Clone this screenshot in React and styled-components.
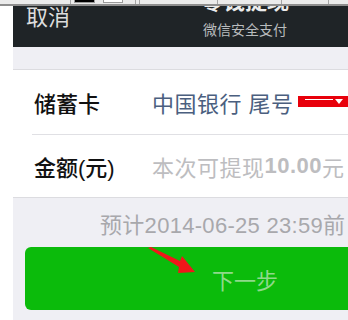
import React from "react";
import styled, { createGlobalStyle } from "styled-components";

const Global = createGlobalStyle`
  html, body { margin: 0; padding: 0; background: #ffffff; }
  body { font-family: "Liberation Sans", "Noto Sans CJK SC", sans-serif; }
`;

const Frame = styled.div`
  width: 348px;
  height: 320px;
  overflow: hidden;
  display: flex;
  flex-direction: column;
  background: #ffffff;
`;

const Toolbar = styled.div`
  height: 4px;
  flex: none;
  display: flex;
  align-items: flex-start;
  background: #ebebeb;
  border-bottom: 2px solid #8e8e8e;
  position: relative;
  z-index: 2;
`;

const Swatch = styled.span`
  width: ${(p) => p.w}px;
  height: 3px;
  margin-left: ${(p) => p.ml}px;
  background: ${(p) => p.c};
  border: 1px solid #9a9a9a;
  border-top: none;
  box-sizing: border-box;
`;

const Sep = styled.span`
  width: 1px;
  height: 4px;
  margin-left: ${(p) => p.ml}px;
  background: #a5a5a5;
`;

const Body = styled.div`
  flex: 1;
  display: flex;
  min-height: 0;
`;

const Gutter = styled.div`
  width: 13px;
  flex: none;
  background: #ffffff;
`;

const Phone = styled.div`
  width: 464px;
  flex: none;
  display: flex;
  flex-direction: column;
  background: #efeff4;
  overflow: hidden;
`;

const Header = styled.div`
  height: 55px;
  margin-top: -14px;
  flex: none;
  background: #1f2427;
  display: flex;
  align-items: flex-start;
  position: relative;
`;

const Cancel = styled.div`
  position: absolute;
  left: 13px;
  top: 14px;
  font-size: 22px;
  line-height: 24px;
  color: #dcdcdc;
`;

const TitleBlock = styled.div`
  flex: 1;
  display: flex;
  flex-direction: column;
  align-items: center;
`;

const Title = styled.div`
  font-size: 22px;
  line-height: 24px;
  font-weight: bold;
  color: #ececec;
  margin-top: -2px;
`;

const Subtitle = styled.div`
  font-size: 14px;
  line-height: 16px;
  color: #b9bcbe;
  margin-top: 8px;
`;

const Band = styled.div`
  height: 22px;
  flex: none;
`;

const Group = styled.div`
  background: #ffffff;
  border-top: 1px solid #dcdce0;
  border-bottom: 1px solid #dcdce0;
  display: flex;
  flex-direction: column;
`;

const Row = styled.div`
  height: ${(p) => (p.first ? 64 : 62)}px;
  margin-left: 19px;
  padding-left: 2px;
  display: flex;
  align-items: center;
  border-top: ${(p) => (p.first ? "none" : "1px solid #e0e0e4")};
`;

const Label = styled.div`
  width: 118px;
  flex: none;
  font-size: 22px;
  color: #111111;
  font-weight: 500;
`;

const Value = styled.div`
  font-size: 22px;
  letter-spacing: 0.5px;
  white-space: nowrap;
  color: ${(p) => p.color};
  display: flex;
  align-items: center;
`;

const Strong = styled.span`
  font-weight: bold;
`;

const Redact = styled.span`
  width: 60px;
  height: 11px;
  margin-left: 4px;
  margin-top: -2px;
  background: #e8000b;
  position: relative;
  flex: none;
  &::before {
    content: "";
    position: absolute;
    left: 7px;
    top: 3px;
    width: 28px;
    height: 1px;
    background: #ffffff;
  }
  &::after {
    content: "";
    position: absolute;
    left: 37px;
    top: 3px;
    border-left: 4px solid transparent;
    border-right: 4px solid transparent;
    border-top: 5px solid #ffffff;
  }
`;

const Note = styled.div`
  height: 49px;
  flex: none;
  display: flex;
  align-items: center;
  padding-left: 87px;
  font-size: 22px;
  letter-spacing: 0.3px;
  color: #a8a8ac;
  white-space: nowrap;
`;

const Button = styled.div`
  margin: 0 12px;
  height: 63px;
  flex: none;
  border-radius: 6px;
  background: #0bbb0b;
  display: flex;
  align-items: center;
  justify-content: center;
  font-size: 22px;
  color: #8fd98b;
  position: relative;
`;

const Arrow = styled.svg`
  position: absolute;
  left: 123px;
  top: 0px;
  width: 50px;
  height: 28px;
`;

export default function App() {
  return (
    <>
      <Global />
      <Frame>
        <Toolbar>
          <Sep ml={70} />
          <Swatch ml={3} w={21} c="#000000" />
          <Swatch ml={8} w={20} c="#ffffff" />
          <Sep ml={12} />
          <Sep ml={3} />
          <Sep ml={77} />
          <Sep ml={63} />
          <Sep ml={46} />
        </Toolbar>
        <Body>
          <Gutter />
          <Phone>
            <Header>
              <Cancel>取消</Cancel>
              <TitleBlock>
                <Title>零钱提现</Title>
                <Subtitle>微信安全支付</Subtitle>
              </TitleBlock>
            </Header>
            <Band />
            <Group>
              <Row first>
                <Label>储蓄卡</Label>
                <Value color="#4b5f7f">
                  中国银行 尾号<Redact />
                </Value>
              </Row>
              <Row>
                <Label>金额(元)</Label>
                <Value color="#bdbdc0">
                  本次可提现<Strong>10.00</Strong>元
                </Value>
              </Row>
            </Group>
            <Note>预计2014-06-25 23:59前</Note>
            <Button>
              下一步
              <Arrow viewBox="0 0 50 28">
                <polygon points="0,1 3,0 32,14 34,9 47,25 30,26 31,20" fill="#f0161a" />
              </Arrow>
            </Button>
          </Phone>
        </Body>
      </Frame>
    </>
  );
}
